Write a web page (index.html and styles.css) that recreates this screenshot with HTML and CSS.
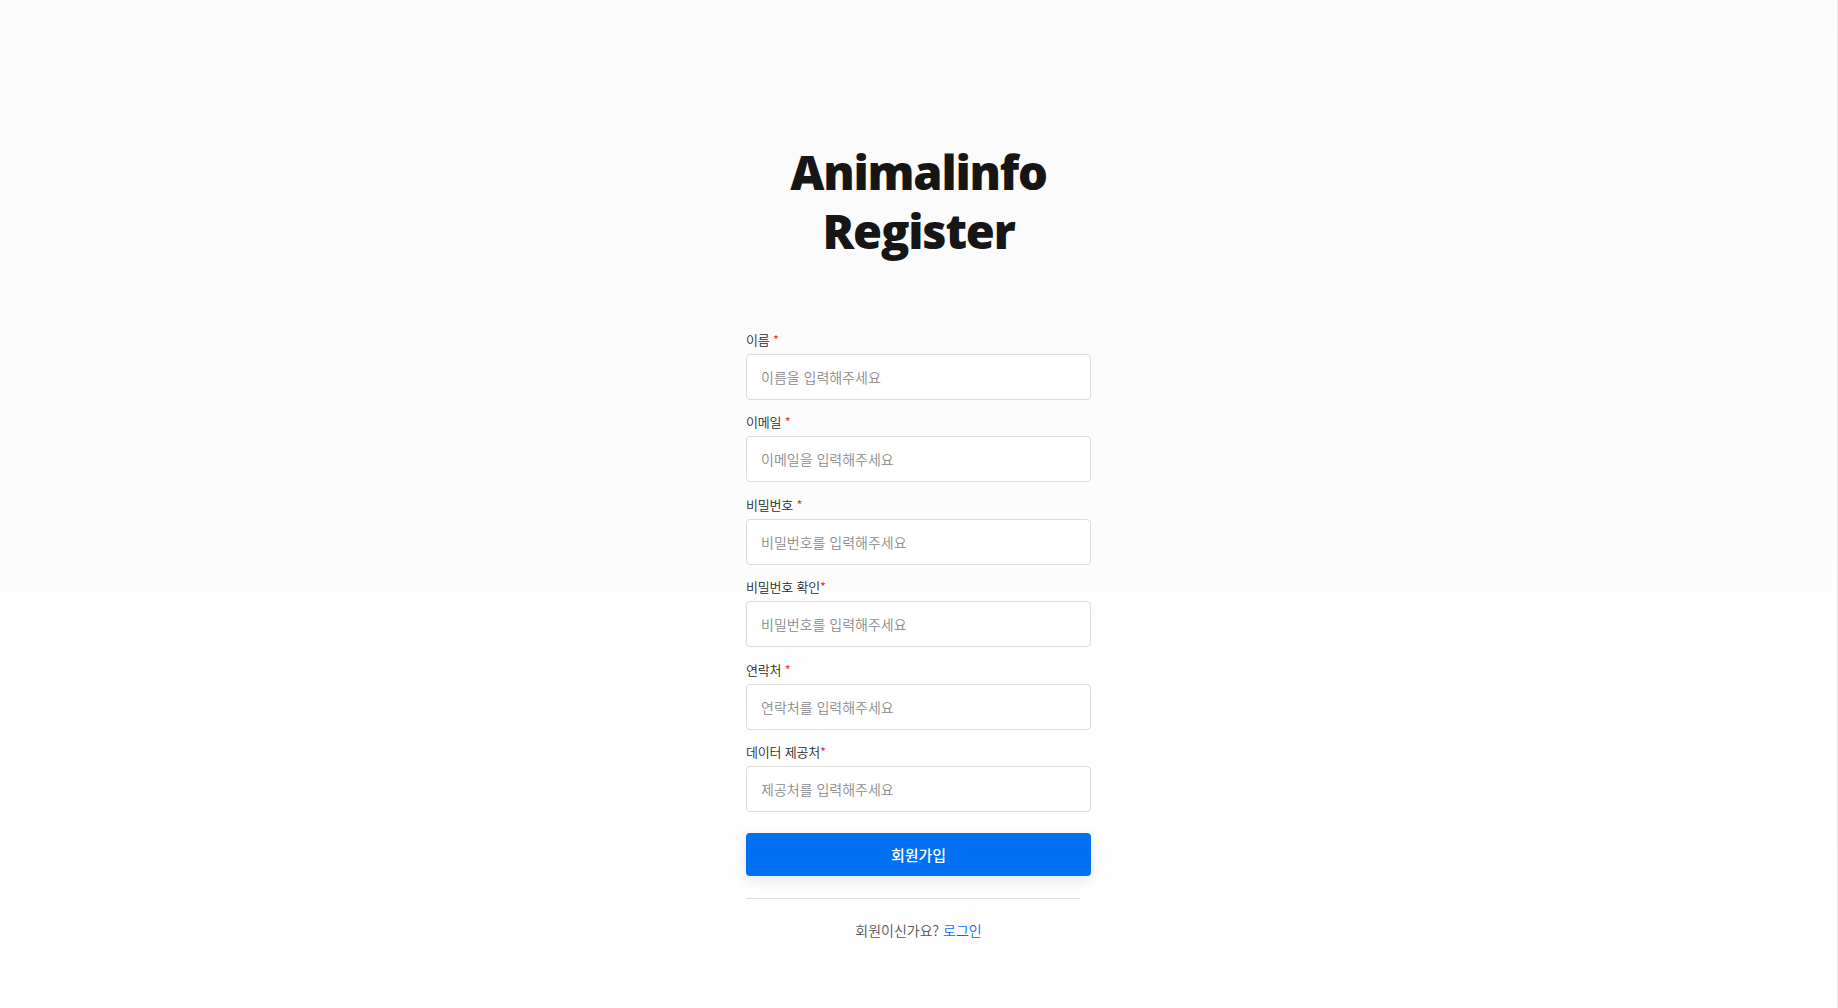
FILE: index.html
```html
<!DOCTYPE html>
<html lang="ko">
<head>
<meta charset="utf-8">
<title>Animalinfo Register</title>
<link rel="stylesheet" href="styles.css">
</head>
<body>
<div class="page">
  <main class="register">
    <h1 class="title">Animalinfo<br>Register</h1>
    <form class="form">
      <div class="field">
        <label class="label">이름 <span class="req">*</span></label>
        <input class="input" type="text" placeholder="이름을 입력해주세요">
      </div>
      <div class="field">
        <label class="label">이메일 <span class="req">*</span></label>
        <input class="input" type="text" placeholder="이메일을 입력해주세요">
      </div>
      <div class="field">
        <label class="label">비밀번호 <span class="req">*</span></label>
        <input class="input" type="password" placeholder="비밀번호를 입력해주세요">
      </div>
      <div class="field">
        <label class="label">비밀번호 확인<span class="req">*</span></label>
        <input class="input" type="password" placeholder="비밀번호를 입력해주세요">
      </div>
      <div class="field">
        <label class="label">연락처 <span class="req">*</span></label>
        <input class="input" type="text" placeholder="연락처를 입력해주세요">
      </div>
      <div class="field">
        <label class="label">데이터 제공처<span class="req">*</span></label>
        <input class="input" type="text" placeholder="제공처를 입력해주세요">
      </div>
      <button class="submit" type="button">회원가입</button>
      <hr class="divider">
      <p class="footer">회원이신가요? <a class="link" href="#">로그인</a></p>
    </form>
  </main>
</div>
</body>
</html>
```

FILE: styles.css
```css
* { box-sizing: border-box; }
html, body {
  margin: 0;
  padding: 0;
  height: 100%;
}
body {
  font-family: "Noto Sans CJK KR", "Noto Sans", sans-serif;
  color: #222;
}
.page {
  min-height: 100%;
  background: linear-gradient(#fafafa, #ffffff);
  border-right: 1px solid #e6e6e6;
  display: flex;
  justify-content: center;
}
.register {
  width: 345px;
  padding-top: 143px;
  display: flex;
  flex-direction: column;
  align-items: stretch;
}
.title {
  margin: 0 -60px;
  text-align: center;
  font-family: "Open Sans", sans-serif;
  font-weight: 800;
  font-size: 47px;
  letter-spacing: -1.2px;
  line-height: 59px;
  color: #161616;
}
.form {
  margin-top: 70px;
  display: flex;
  flex-direction: column;
}
.field {
  display: flex;
  flex-direction: column;
  margin-bottom: 13.4px;
}
.label {
  font-size: 13px;
  font-weight: 350;
  line-height: 18px;
  margin-bottom: 5px;
  color: #2a2a2a;
  letter-spacing: -0.2px;
}
.req {
  color: #e5252a;
}
.input {
  height: 46px;
  border: 1px solid #dcdcdc;
  border-radius: 4px;
  background: #fff;
  padding: 0 14px;
  font-family: "Noto Sans CJK KR", sans-serif;
  font-size: 14px;
  font-weight: 350;
  color: #333;
  outline: none;
}
.input::placeholder {
  color: #8a8a8a;
}
.submit {
  margin-top: 8px;
  height: 43px;
  border: none;
  border-radius: 4px;
  background: #0070f3;
  color: #fff;
  font-family: "Noto Sans CJK KR", sans-serif;
  font-size: 15px;
  font-weight: 500;
  box-shadow: 0 4px 14px rgba(0, 0, 0, 0.1);
}
.divider {
  width: 334px;
  margin: 22px 0 0 0;
  border: none;
  border-top: 1px solid #e0e0e0;
}
.footer {
  margin: 21px 0 0 0;
  text-align: center;
  font-size: 14px;
  font-weight: 350;
  line-height: 20px;
  color: #555;
}
.link {
  color: #0070f3;
  text-decoration: none;
}
```
